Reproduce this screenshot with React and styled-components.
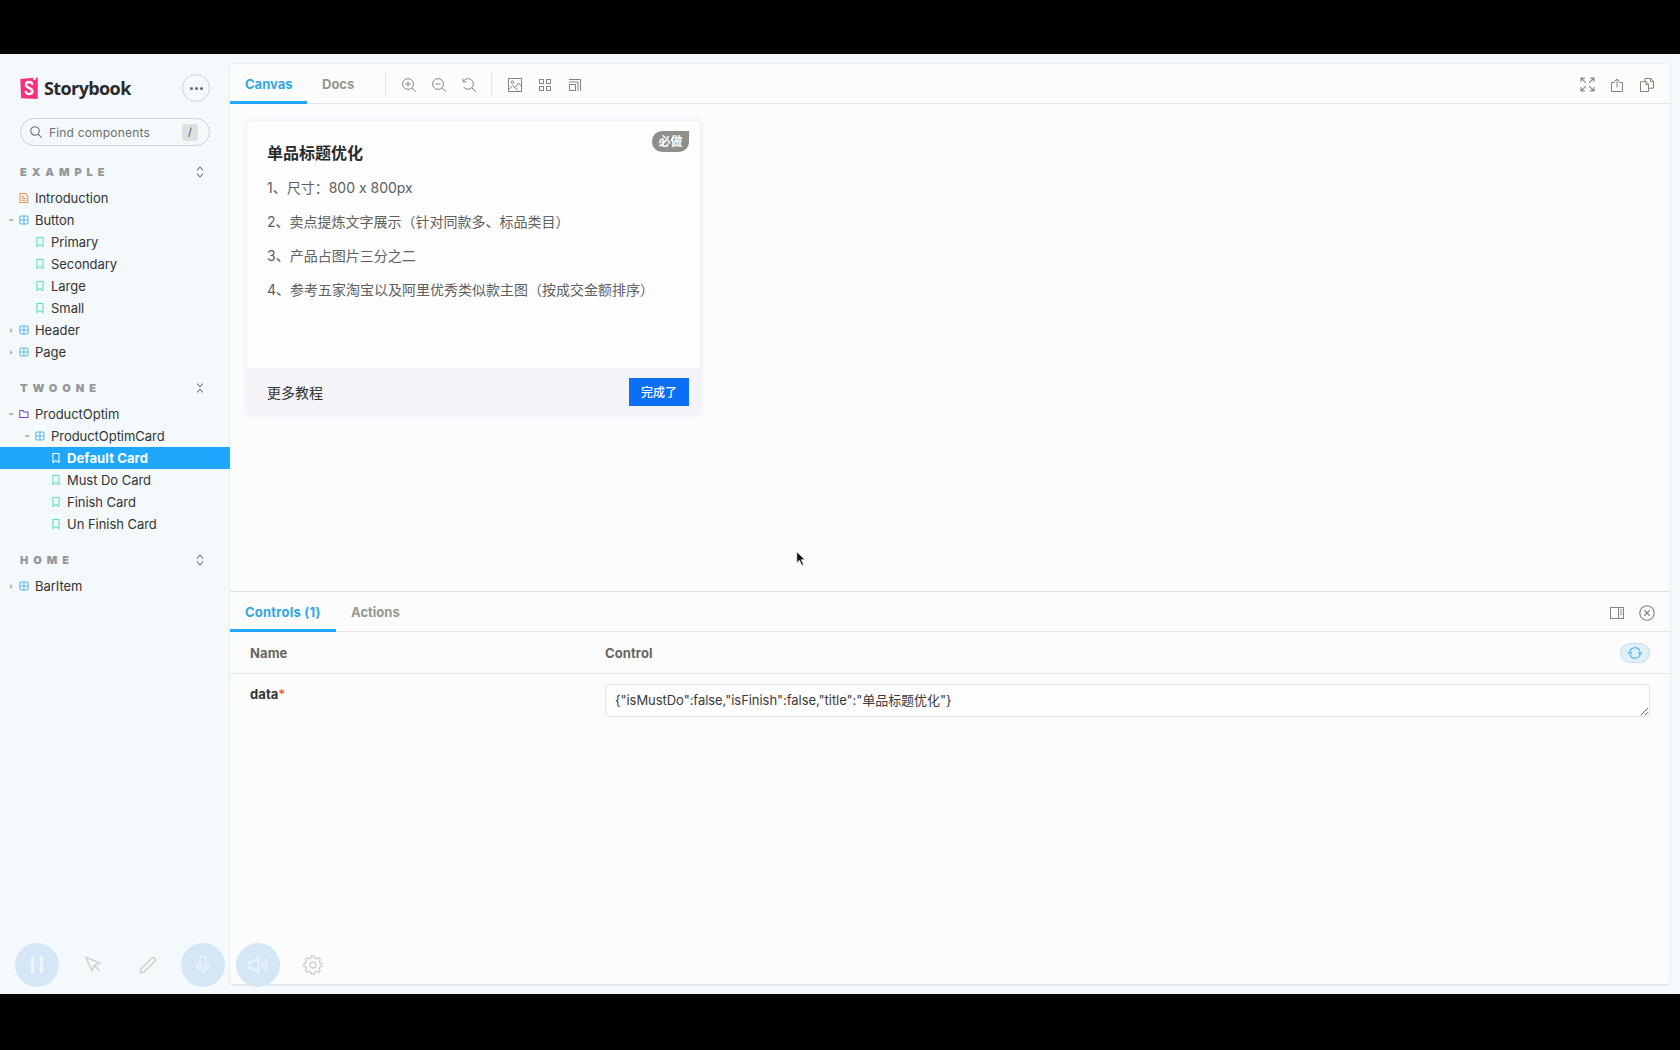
import React from "react";
import styled, { createGlobalStyle } from "styled-components";

const sans = `Inter, "Noto Sans CJK SC", "Liberation Sans", sans-serif`;

const GlobalStyle = createGlobalStyle`
  *, *::before, *::after { box-sizing: border-box; }
  body { margin: 0; background: #000; font-family: ${sans}; font-size: 13px; color: #333; overflow: hidden; }
  button { font-family: inherit; border: 0; padding: 0; margin: 0; background: none; }
`;

const Screen = styled.div`
  width: 1680px;
  height: 1050px;
  padding: 54px 0 56px;
  background: #000;
`;

const Shell = styled.div`
  position: relative;
  display: flex;
  height: 940px;
  padding: 10px 10px 10px 0;
  background: #f4f9fc;
`;

const Sidebar = styled.nav`
  position: relative;
  z-index: 1;
  width: 230px;
  flex: none;
  display: flex;
  flex-direction: column;
`;

const Brand = styled.div`
  display: flex;
  align-items: center;
  height: 28px;
  margin: 10px 20px 0;
`;

const BrandName = styled.span`
  flex: 1;
  margin-left: 6px;
  font: 700 18px/28px "Open Sans", sans-serif;
  letter-spacing: -0.6px;
  color: #2b2b2b;
`;

const MenuButton = styled.button`
  display: flex;
  align-items: center;
  justify-content: center;
  gap: 2px;
  width: 28px;
  height: 28px;
  border: 1px solid #cdd3d7;
  border-radius: 50%;
`;

const Dot = styled.i`
  width: 3px;
  height: 3px;
  border-radius: 50%;
  background: #666;
`;

const Search = styled.div`
  display: flex;
  align-items: center;
  height: 28px;
  margin: 16px 20px 0;
  padding: 0 11px 0 9px;
  border: 1px solid #cdd3d7;
  border-radius: 14px;
  color: #6c6f71;
`;

const Placeholder = styled.span`
  flex: 1;
  margin-left: 7px;
  padding-top: 1px;
  font-size: 12px;
  letter-spacing: 0.18px;
`;

const Key = styled.kbd`
  width: 16px;
  height: 17px;
  border-radius: 3px;
  background: #dbe2e1;
  font: 11px/17px ${sans};
  text-align: center;
  color: #555;
`;

const Section = styled.section`
  margin-top: ${(p) => p.$top}px;
`;

const SectionHead = styled.header`
  display: flex;
  align-items: center;
  justify-content: space-between;
  height: 20px;
  margin-bottom: 5px;
  padding: 0 26px 0 20px;
`;

const SectionName = styled.h2`
  margin: 0;
  font-size: 11px;
  font-weight: 900;
  letter-spacing: 4.95px;
  color: #93989a;
`;

const Row = styled.div`
  display: flex;
  align-items: center;
  height: 22px;
  padding-left: ${(p) => 8 + p.$depth * 16}px;
  background: ${(p) => (p.$active ? "#1ea7fd" : "transparent")};
  color: ${(p) => (p.$active ? "#fff" : "#333")};
  font-weight: ${(p) => (p.$active ? 700 : 400)};
  letter-spacing: ${(p) => (p.$active ? 0.12 : -0.04)}px;
`;

const CaretSlot = styled.span`
  display: flex;
  width: 11px;
  height: 7px;
`;

const RowLabel = styled.span`
  margin-left: 6px;
`;

const Main = styled.main`
  flex: 1;
  display: flex;
  flex-direction: column;
  height: 921px;
  border-bottom: 1px solid #dfe3ea;
  border-radius: 4px;
  background: #fcfcfd;
  box-shadow: 0 0 0 1px #e9eef3;
`;

const Bar = styled.div`
  display: flex;
  align-items: stretch;
  justify-content: space-between;
  height: 40px;
  flex: none;
  border-bottom: 1px solid #e3e4ef;
`;

const BarGroup = styled.div`
  display: flex;
  align-items: center;
  height: 40px;
  padding-right: ${(p) => (p.$end ? 8 : 0)}px;
`;

const Tab = styled.button`
  height: 40px;
  width: ${(p) => p.$width}px;
  padding: 3px 0 0 15px;
  text-align: left;
  font-size: 13px;
  font-weight: 700;
  line-height: 34px;
  letter-spacing: ${(p) => p.$spacing || 0}px;
  border-bottom: 3px solid ${(p) => (p.$active ? "#1ea7fd" : "transparent")};
  color: ${(p) => (p.$active ? "#30a7e6" : "#97978f")};
`;

const Divider = styled.i`
  width: 1px;
  height: 24px;
  margin: 0 8px 0 ${(p) => p.$left}px;
  background: #e3e4ef;
`;

const Tool = styled.button`
  display: flex;
  align-items: center;
  justify-content: center;
  width: 30px;
  height: 28px;
  padding-top: 1px;
  color: #85857c;
`;

const Preview = styled.div`
  height: 487px;
  flex: none;
  padding: 17px;
`;

const Card = styled.article`
  display: flex;
  flex-direction: column;
  width: 453px;
  height: 294px;
  border-radius: 4px;
  background: #fdfdfd;
  box-shadow: 0 0 6px 1px #ebebf3;
`;

const CardBody = styled.div`
  flex: 1;
  display: flex;
  justify-content: space-between;
  padding: 10px 11px 0 20px;
`;

const CardTitle = styled.h3`
  margin: 10px 0 6px;
  font-size: 16px;
  line-height: 24px;
  font-weight: 700;
  color: #2b2b2b;
`;

const CardLine = styled.p`
  margin: 0;
  font-size: 14px;
  line-height: 34px;
  color: #606060;
`;

const Badge = styled.span`
  width: 37px;
  height: 21px;
  border-radius: 10px 0 10px 10px;
  background: #8e8e8b;
  font-size: 12px;
  font-weight: 700;
  line-height: 21px;
  text-align: center;
  color: #fff;
`;

const CardFooter = styled.footer`
  display: flex;
  align-items: center;
  justify-content: space-between;
  height: 47px;
  padding: 0 11px 0 20px;
  border-radius: 0 0 4px 4px;
  background: #f5f5f9;
  font-size: 14px;
  color: #333;
`;

const DoneButton = styled.button`
  width: 60px;
  height: 28px;
  background: #0a6ff5;
  color: #fff;
  font-size: 12px;
  font-weight: 500;
`;

const Addons = styled.section`
  flex: 1;
  display: flex;
  flex-direction: column;
  border-top: 1px solid #dfe1ec;
`;

const ControlRow = styled.div`
  display: grid;
  grid-template-columns: 355px 1fr auto;
  align-items: ${(p) => (p.$head ? "center" : "start")};
  height: ${(p) => (p.$head ? 42 : 60)}px;
  padding: ${(p) => (p.$head ? "0 20px" : "10px 20px")};
  border-bottom: ${(p) => (p.$head ? "1px solid #e3e4ef" : "0")};
  font-weight: 700;
  letter-spacing: 0.1px;
  color: ${(p) => (p.$head ? "#66665f" : "#333")};
`;

const ArgName = styled.span`
  padding-top: 2px;
`;

const Required = styled.span`
  color: #ff4400;
  font-weight: 400;
`;

const ResetButton = styled.button`
  display: flex;
  align-items: center;
  justify-content: center;
  width: 30px;
  height: 20px;
  border: 1px solid #cddae6;
  border-radius: 10px;
  background: #dff0fb;
  color: #3aa9ea;
`;

const JsonField = styled.div`
  grid-column: 2 / 4;
  display: flex;
  align-items: flex-end;
  justify-content: space-between;
  height: 33px;
  padding-left: 9px;
  border: 1px solid #dfe0e8;
  border-radius: 4px;
  background: #fdfdfd;
  font-weight: 400;
  line-height: 31px;
  letter-spacing: -0.05px;
  color: #3b3b38;
`;

const Recorder = styled.div`
  position: absolute;
  left: 15px;
  top: 889px;
  z-index: 2;
  display: flex;
  align-items: center;
  height: 44px;
`;

const RecorderButton = styled.button`
  display: flex;
  align-items: center;
  justify-content: center;
  width: 44px;
  height: 44px;
  margin-left: ${(p) => p.$left || 0}px;
  border-radius: 50%;
  background: ${(p) => (p.$filled ? "#d5e6f7" : "transparent")};
  color: ${(p) => (p.$filled ? "#eef5fd" : "#d2d2cb")};
`;

const Pointer = styled.svg`
  position: absolute;
  left: 796px;
  top: 497px;
`;

const Svg = ({ size = 14, children, box = "0 0 14 14", w = 1 }) => (
  <svg width={size} height={size} viewBox={box} fill="none" stroke="currentColor" strokeWidth={w}>
    {children}
  </svg>
);

const Logo = () => (
  <svg width="18" height="22" viewBox="0 0 18 22">
    <path d="M.3 1.9 17 .5a.8.8 0 0 1 .8.8v19.9a.8.8 0 0 1-.8.8L1.8 21.3a.8.8 0 0 1-.8-.8z" fill="#f92f7f" />
    <path d="M13.2.5 15.8.3v3.3l-1.3-1-1.4.9z" fill="#fff" />
    <path d="M12.3 7.8C12.2 5.8 11 5.1 9.1 5.1S6 6.1 6 7.8c0 3.8 6.4 2.7 6.4 6.3 0 2-1.3 3-3.3 3s-3.4-.9-3.3-3.2" fill="none" stroke="#fff" strokeWidth="2.5" />
  </svg>
);

const Caret = ({ open }) => (
  <svg width="7" height="7" viewBox="0 0 7 7" fill="#b5b5ad">
    <path d={open ? "M.7 2h5.2L3.3 5z" : "M2 .9 4.8 3.5 2 6.1z"} />
  </svg>
);

const kinds = {
  document: { color: "#e8914c", art: <path d="M.8.5h5L8.3 3v6.1H.8zM2.5 3.2h2.2M2.5 5h4.1M2.5 6.9h4.1" /> },
  component: { color: "#58b5e2", art: <><rect x=".7" y=".9" width="7.8" height="7.8" rx="1.2" /><path d="M4.6 1v7.6M.8 4.8h7.6" /></> },
  story: { color: "#5fdcc3", art: <path d="M1.7.5h5.8v8.7L4.6 7 1.7 9.2z" /> },
  group: { color: "#7a45c4", art: <path d="M.6 1.5h3l1 1.3h3.9v5.4H.6z" /> },
};

const KindIcon = ({ kind, active }) => (
  <svg width="10" height="10" viewBox="0 0 9.3 9.6" fill="none" stroke={active ? "#fff" : kinds[kind].color} strokeWidth="1">
    {kinds[kind].art}
  </svg>
);

const Item = ({ kind, depth = 0, open, active, children }) => (
  <Row $depth={depth} $active={active}>
    <CaretSlot>{open !== undefined && <Caret open={open} />}</CaretSlot>
    <KindIcon kind={kind} active={active} />
    <RowLabel>{children}</RowLabel>
  </Row>
);

const Toggle = ({ collapse }) => (
  <svg width="8" height="12" viewBox="0 0 8 12" fill="none" stroke="#77797a" strokeWidth="1.1">
    <path d={collapse ? "M1 1.5l3 3.3L7 1.5M1 10.5l3-3.3L7 10.5" : "M1 4.3 4 1l3 3.3M1 7.7 4 11l3-3.3"} />
  </svg>
);

const Group = ({ name, top = 15, collapse, children }) => (
  <Section $top={top}>
    <SectionHead>
      <SectionName>{name}</SectionName>
      <Toggle collapse={collapse} />
    </SectionHead>
    {children}
  </Section>
);

export default function App() {
  return (
    <Screen>
      <GlobalStyle />
      <Shell>
        <Sidebar>
          <Brand>
            <Logo />
            <BrandName>Storybook</BrandName>
            <MenuButton><Dot /><Dot /><Dot /></MenuButton>
          </Brand>
          <Search>
            <Svg size={12} box="0 0 14 14" w={1.3}><circle cx="5.8" cy="5.8" r="5" /><path d="m9.5 9.5 4 4" /></Svg>
            <Placeholder>Find components</Placeholder>
            <Key>/</Key>
          </Search>
          <Group name="EXAMPLE" top={16}>
            <Item kind="document">Introduction</Item>
            <Item kind="component" open>Button</Item>
            <Item kind="story" depth={1}>Primary</Item>
            <Item kind="story" depth={1}>Secondary</Item>
            <Item kind="story" depth={1}>Large</Item>
            <Item kind="story" depth={1}>Small</Item>
            <Item kind="component" open={false}>Header</Item>
            <Item kind="component" open={false}>Page</Item>
          </Group>
          <Group name="TWOONE" collapse>
            <Item kind="group" open>ProductOptim</Item>
            <Item kind="component" depth={1} open>ProductOptimCard</Item>
            <Item kind="story" depth={2} active>Default Card</Item>
            <Item kind="story" depth={2}>Must Do Card</Item>
            <Item kind="story" depth={2}>Finish Card</Item>
            <Item kind="story" depth={2}>Un Finish Card</Item>
          </Group>
          <Group name="HOME">
            <Item kind="component" open={false}>BarItem</Item>
          </Group>
        </Sidebar>

        <Main>
          <Bar>
            <BarGroup>
              <Tab $width={77} $active>Canvas</Tab>
              <Tab $width={63}>Docs</Tab>
              <Divider $left={15} />
              <Tool><Svg><circle cx="6" cy="6" r="5.4" /><path d="m10 10 3.7 3.7M3.4 6h5.2M6 3.4v5.2" /></Svg></Tool>
              <Tool><Svg><circle cx="6" cy="6" r="5.4" /><path d="m10 10 3.7 3.7M3.4 6h5.2" /></Svg></Tool>
              <Tool><Svg><path d="M1.5 3.2A5.3 5.3 0 1 1 1.7 9M1 .7v3.2h3.3M10 10l3.7 3.7" /></Svg></Tool>
              <Divider $left={7} />
              <Tool><Svg><rect x=".5" y=".5" width="13" height="13" /><path d="m.8 11.5 4-4 2.2 2L10.5 5l3 3.4M7 9.5l2.8 3" /><circle cx="4.4" cy="4.2" r="1.3" /></Svg></Tool>
              <Tool><Svg><rect x="1.5" y="1.5" width="4" height="4" /><rect x="8.5" y="1.5" width="4" height="4" /><rect x="1.5" y="8.5" width="4" height="4" /><rect x="8.5" y="8.5" width="4" height="4" /></Svg></Tool>
              <Tool><Svg><path d="M1 1.5h11.5V13M1 4h9v9" /><rect x="1.5" y="6.5" width="6" height="6" /></Svg></Tool>
            </BarGroup>
            <BarGroup $end>
              <Tool><Svg size={15} w={1.1}><path d="M1 4.5V1h3.5M9.5 1H13v3.5M13 9.5V13H9.5M4.5 13H1V9.5M1 1l4.5 4.5M13 1 8.5 5.5M13 13 8.5 8.5M1 13l4.5-4.5" /></Svg></Tool>
              <Tool><Svg><path d="M4.5 4.5h-3v9h11v-9h-3M7 9.5V1M4.2 3.7 7 1l2.8 2.7" /></Svg></Tool>
              <Tool><Svg><path d="M.5 3.7h5.7l2.3 2.5v7.3h-8zM6 3.7v3h2.5M5 3.5v-3h5.8l2.7 2.7v7H8.7M10.6.8v2.7h2.6" /></Svg></Tool>
            </BarGroup>
          </Bar>

          <Preview>
            <Card>
              <CardBody>
                <div>
                  <CardTitle>单品标题优化</CardTitle>
                  <CardLine>1、尺寸：800 x 800px</CardLine>
                  <CardLine>2、卖点提炼文字展示（针对同款多、标品类目）</CardLine>
                  <CardLine>3、产品占图片三分之二</CardLine>
                  <CardLine>4、参考五家淘宝以及阿里优秀类似款主图（按成交金额排序）</CardLine>
                </div>
                <Badge>必做</Badge>
              </CardBody>
              <CardFooter>
                <span>更多教程</span>
                <DoneButton>完成了</DoneButton>
              </CardFooter>
            </Card>
          </Preview>

          <Addons>
            <Bar>
              <BarGroup>
                <Tab $width={106} $spacing={0.22} $active>Controls (1)</Tab>
                <Tab $width={80}>Actions</Tab>
              </BarGroup>
              <BarGroup $end>
                <Tool><Svg><rect x=".5" y="1.5" width="13" height="11" /><path d="M8.5 1.5v11M10 4h2.2M10 6.2h2.2M10 8.4h2.2" /></Svg></Tool>
                <Tool><Svg size={16}><circle cx="7" cy="7" r="6.3" /><path d="m4.6 4.6 4.8 4.8M9.4 4.6 4.6 9.4" /></Svg></Tool>
              </BarGroup>
            </Bar>
            <ControlRow $head>
              <span>Name</span>
              <span>Control</span>
              <ResetButton>
                <Svg size={14} w={1.1}><path d="M1.8 6a5.3 5.3 0 0 1 10.2-.6M12.2 8A5.3 5.3 0 0 1 2 8.6M.2 7.8 1.9 6l1.8 1.6M13.8 6.2 12.2 8l-1.9-1.6" /></Svg>
              </ResetButton>
            </ControlRow>
            <ControlRow>
              <ArgName>data<Required>*</Required></ArgName>
              <JsonField>
                <span>{'{"isMustDo":false,"isFinish":false,"title":"单品标题优化"}'}</span>
                <Svg size={9} box="0 0 9 9"><path d="M.8 8.2 8 1M5 8.2 8 5.2" stroke="#666" /></Svg>
              </JsonField>
            </ControlRow>
          </Addons>
        </Main>

        <Recorder>
          <RecorderButton $filled><Svg size={20} box="0 0 20 20" w={3}><path d="M5.5 2v16M14.5 2v16" /></Svg></RecorderButton>
          <RecorderButton $left={12}><Svg size={18} box="0 0 18 18" w={1.5}><path d="M2 1.5 16 7l-5.5 2.2L8 14.7zM10.5 9.5l5 5.5" /></Svg></RecorderButton>
          <RecorderButton $left={11}><Svg size={18} box="0 0 18 18" w={1.5}><path d="M1.5 16.5v-3L13 2a1.6 1.6 0 0 1 2.4 0l.6.6a1.6 1.6 0 0 1 0 2.4L4.5 16.5z" /></Svg></RecorderButton>
          <RecorderButton $left={11} $filled><Svg size={20} box="0 0 20 20" w={1.5}><rect x="7" y="1" width="6" height="11" rx="3" /><path d="M4 9a6 6 0 0 0 12 0M10 15v4" /></Svg></RecorderButton>
          <RecorderButton $left={11} $filled><Svg size={20} box="0 0 20 20" w={1.5}><path d="M1 7v6h3.5l6 4V3l-6 4zM13.5 7a4 4 0 0 1 0 6M16 4a8 8 0 0 1 0 12" /></Svg></RecorderButton>
          <RecorderButton $left={11}>
            <Svg size={20} box="0 0 20 20" w={1.5}>
              <path d="m8.4 1-.5 2.1-1.7.7-1.9-1.1-2 2 1.1 1.9-.7 1.6L1 8.8v2.6l1.8.5.6 1.7-1 1.8 2 2 1.8-1 1.7.7.5 1.8h2.8l.5-1.8 1.8-.7 1.8 1 1.9-1.9-1-1.9.7-1.6 1.9-.6V8.6l-1.9-.5-.7-1.7 1-1.8-2-1.9-1.7 1-1.7-.6L11.3 1z" />
              <circle cx="10" cy="10" r="3" />
            </Svg>
          </RecorderButton>
        </Recorder>

        <Pointer width="11" height="17" viewBox="0 0 11 17">
          <path d="M.8.8v11l2.7-2.5 2.2 5 1.8-.8-2.2-4.8h3.6z" fill="#111" stroke="#e4e4ea" strokeWidth=".8" />
        </Pointer>
      </Shell>
    </Screen>
  );
}
